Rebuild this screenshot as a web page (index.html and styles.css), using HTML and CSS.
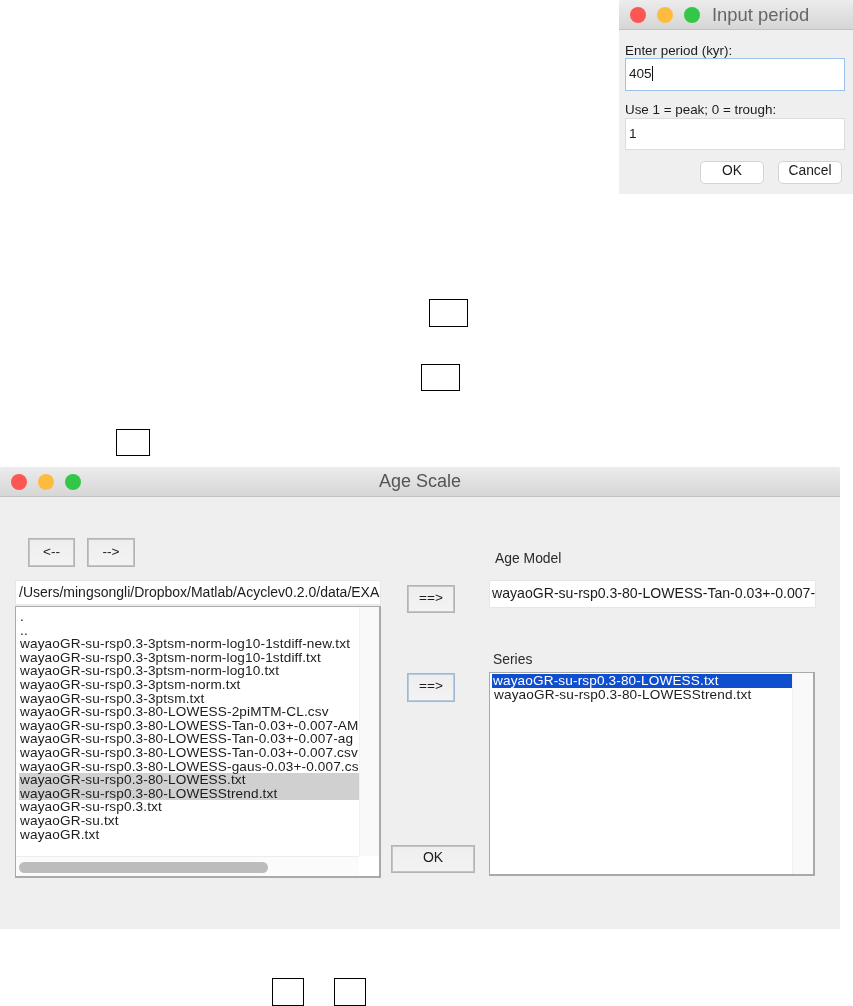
FILE: index.html
```html
<!DOCTYPE html>
<html lang="en">
<head>
<meta charset="utf-8">
<title>Age Scale</title>
<link rel="stylesheet" href="styles.css">
</head>
<body>
<div class="page">
  <section class="dialog">
    <header class="titlebar dialog-bar">
      <div class="lights">
        <span class="light red"></span><span class="light amber"></span><span class="light green"></span>
      </div>
      <span class="dialog-title">Input period</span>
    </header>
    <div class="dialog-body">
      <label class="dialog-label">Enter period (kyr):</label>
      <div class="dialog-field focused"><span class="caret">405</span></div>
      <label class="dialog-label second">Use 1 = peak; 0 = trough:</label>
      <div class="dialog-field">1</div>
      <div class="dialog-actions">
        <span class="round-btn">OK</span>
        <span class="round-btn">Cancel</span>
      </div>
    </div>
  </section>

  <div class="mark mark-a"></div>
  <div class="mark mark-b"></div>
  <div class="mark mark-c"></div>

  <section class="window">
    <header class="titlebar window-bar">
      <div class="lights">
        <span class="light red"></span><span class="light amber"></span><span class="light green"></span>
      </div>
      <span class="window-title">Age Scale</span>
    </header>
    <div class="window-body">
      <div class="col-left">
        <div class="nav">
          <span class="btn nav-btn">&lt;--</span>
          <span class="btn nav-btn">--&gt;</span>
        </div>
        <div class="field path-field">/Users/mingsongli/Dropbox/Matlab/Acyclev0.2.0/data/EXA</div>
        <div class="listbox file-list">
          <ul class="rows">
            <li>.</li>
            <li>..</li>
            <li>wayaoGR-su-rsp0.3-3ptsm-norm-log10-1stdiff-new.txt</li>
            <li>wayaoGR-su-rsp0.3-3ptsm-norm-log10-1stdiff.txt</li>
            <li>wayaoGR-su-rsp0.3-3ptsm-norm-log10.txt</li>
            <li>wayaoGR-su-rsp0.3-3ptsm-norm.txt</li>
            <li>wayaoGR-su-rsp0.3-3ptsm.txt</li>
            <li>wayaoGR-su-rsp0.3-80-LOWESS-2piMTM-CL.csv</li>
            <li>wayaoGR-su-rsp0.3-80-LOWESS-Tan-0.03+-0.007-AM</li>
            <li>wayaoGR-su-rsp0.3-80-LOWESS-Tan-0.03+-0.007-ag</li>
            <li>wayaoGR-su-rsp0.3-80-LOWESS-Tan-0.03+-0.007.csv</li>
            <li>wayaoGR-su-rsp0.3-80-LOWESS-gaus-0.03+-0.007.csv</li>
            <li class="picked">wayaoGR-su-rsp0.3-80-LOWESS.txt</li>
            <li class="picked">wayaoGR-su-rsp0.3-80-LOWESStrend.txt</li>
            <li>wayaoGR-su-rsp0.3.txt</li>
            <li>wayaoGR-su.txt</li>
            <li>wayaoGR.txt</li>
          </ul>
          <div class="gutter-v"></div>
          <div class="gutter-h"><div class="thumb"></div></div>
          <div class="corner"></div>
        </div>
      </div>
      <div class="col-mid">
        <span class="btn arrow-btn">==&gt;</span>
        <span class="btn arrow-btn active">==&gt;</span>
        <span class="btn ok-btn">OK</span>
      </div>
      <div class="col-right">
        <div class="caption age-caption">Age Model</div>
        <div class="field age-field">wayaoGR-su-rsp0.3-80-LOWESS-Tan-0.03+-0.007-</div>
        <div class="caption series-caption">Series</div>
        <div class="listbox series-list">
          <ul class="rows">
            <li class="selected">wayaoGR-su-rsp0.3-80-LOWESS.txt</li>
            <li>wayaoGR-su-rsp0.3-80-LOWESStrend.txt</li>
          </ul>
          <div class="gutter-v"></div>
        </div>
      </div>
    </div>
  </section>

  <div class="marks-bottom">
    <div class="mark mark-d"></div>
    <div class="mark mark-d"></div>
  </div>
</div>
</body>
</html>
```
FILE: styles.css
```css
* { box-sizing: border-box; }
html, body { margin: 0; padding: 0; background: #fff; }
body { font-family: "Liberation Sans", Arial, sans-serif; color: #1a1a1a; }
.page { width: 853px; height: 1006px; overflow: hidden; display: flex; flex-direction: column; align-items: flex-start; }

/* shared window chrome */
.titlebar { display: flex; align-items: center; background: linear-gradient(#ececec, #d6d6d6); border-bottom: 1px solid #c2c2c2; position: relative; }
.lights { display: flex; gap: 11px; }
.light { width: 16px; height: 16px; border-radius: 50%; }
.red { background: #fc5753; }
.amber { background: #fdbc40; }
.green { background: #33c748; }

/* Input period dialog */
.dialog { width: 234px; height: 194px; margin-left: 619px; background: #efefef; flex: none; filter: blur(0.35px); }
.dialog-bar { height: 30px; padding-left: 11px; border-radius: 5px 5px 0 0; }
.dialog-title { margin-left: 12px; font-size: 18.4px; color: #666; }
.dialog-body { padding: 14px 8px 0 6px; display: flex; flex-direction: column; }
.dialog-label { font-size: 13.4px; line-height: 14px; color: #1c1c1c; }
.dialog-label.second { margin-top: 12px; }
.dialog-field { height: 32px; margin-top: 1px; background: #fff; border: 1px solid #dcdcdc; padding-left: 3px; font-size: 13.6px; line-height: 30px; color: #1c1c1c; }
.dialog-field.focused { border-color: #9cc3ee; height: 33px; margin-top: 0; }
.caret { border-right: 1px solid #111; display: inline-block; height: 15px; line-height: 15px; }
.dialog-actions { display: flex; justify-content: flex-end; gap: 14px; margin-top: 11px; padding-right: 3px; }
.round-btn { width: 64px; height: 23px; background: #fff; border: 1px solid #d4d4d4; border-radius: 5px; font-size: 13.8px; line-height: 18px; text-align: center; color: #1c1c1c; }

/* annotation rectangles */
.mark { border: 1px solid #000; flex: none; }
.mark-a { width: 39px; height: 28px; margin: 105px 0 0 429px; }
.mark-b { width: 39px; height: 27px; margin: 37px 0 0 421px; }
.mark-c { width: 34px; height: 27px; margin: 38px 0 0 116px; }
.marks-bottom { display: flex; gap: 30px; margin: 49px 0 0 272px; }
.mark-d { width: 32px; height: 28px; }

/* Age Scale window */
.window { width: 840px; height: 462px; margin-top: 11px; background: #efefef; flex: none; filter: blur(0.35px); }
.window-bar { height: 30px; padding-left: 11px; border-radius: 5px 5px 0 0; justify-content: flex-start; }
.window-title { position: absolute; left: 0; right: 0; text-align: center; font-size: 18px; color: #555; }
.window-body { display: flex; padding-left: 15px; font-size: 14px; }
.col-left { width: 366px; display: flex; flex-direction: column; flex: none; }
.col-mid { width: 84px; margin-left: 10px; display: flex; flex-direction: column; align-items: flex-start; flex: none; }
.col-right { width: 327px; margin-left: 14px; display: flex; flex-direction: column; flex: none; }

.btn { display: block; background: linear-gradient(#eeeeee, #f3f3f3); border: 1px solid #b4b4b4; outline: 1px solid #c4c4c4; outline-offset: -2px; text-align: center; color: #1c1c1c; white-space: nowrap; }
.nav { display: flex; gap: 12px; margin: 41px 0 0 13px; }
.nav-btn { width: 47px; height: 29px; line-height: 26px; font-size: 13.6px; }
.nav-btn + .nav-btn { width: 48px; }
.arrow-btn { width: 48px; height: 28px; margin: 88px 0 0 16px; line-height: 23px; font-size: 13.6px; }
.arrow-btn.active { margin-top: 60px; height: 29px; border-color: #9cb9d6; outline-color: #b4cbe2; line-height: 23px; }
.ok-btn { width: 84px; height: 28px; margin-top: 143px; line-height: 23px; font-size: 14px; }

.field { background: #fff; border: 1px solid #e6e6e6; white-space: nowrap; overflow: hidden; color: #1c1c1c; }
.path-field { height: 25px; margin-top: 13px; padding: 4px 0 0 3px; line-height: 15px; font-size: 14px; }
.age-field { height: 28px; padding: 5px 0 0 2px; line-height: 15px; font-size: 14.1px; margin-top: 14px; }

.listbox { background: #fff; border: 2px solid #a9a9a9; border-width: 1px 2px 2px 1px; display: grid; overflow: hidden; }
.file-list { width: 366px; height: 272px; margin-top: 1px; grid-template-columns: 343px 1fr; grid-template-rows: 249px 1fr; }
.series-list { width: 326px; height: 204px; grid-template-columns: 302px 1fr; margin-top: 5px; }
.rows { list-style: none; margin: 0; padding: 3px 0 0 3px; overflow: hidden; font-size: 13.6px; letter-spacing: 0.14px; line-height: 13.6px; }
.rows li { height: 13.6px; padding-left: 1px; white-space: nowrap; color: #1c1c1c; }
.rows .picked { background: #d0d0d0; }
.rows .selected { background: #0f4fcf; color: #fff; }
.series-list .rows { padding: 1px 0 0 2px; }
.series-list .rows li { padding-left: 2px; width: 300px; }
.series-list .rows .selected { padding-left: 1px; }
.gutter-v { background: #f9f9f9; border-left: 1px solid #f0f0f0; }
.gutter-h { background: #fbfbfb; border-top: 1px solid #ececec; padding: 5px 0 0 3px; }
.thumb { width: 249px; height: 11px; border-radius: 6px; background: #bcbcbc; }
.corner { background: #fff; }

.caption { font-size: 13.9px; line-height: 15px; color: #2a2a2a; }
.age-caption { margin: 54px 0 0 6px; }
.series-caption { margin: 44px 0 0 4px; }
```
